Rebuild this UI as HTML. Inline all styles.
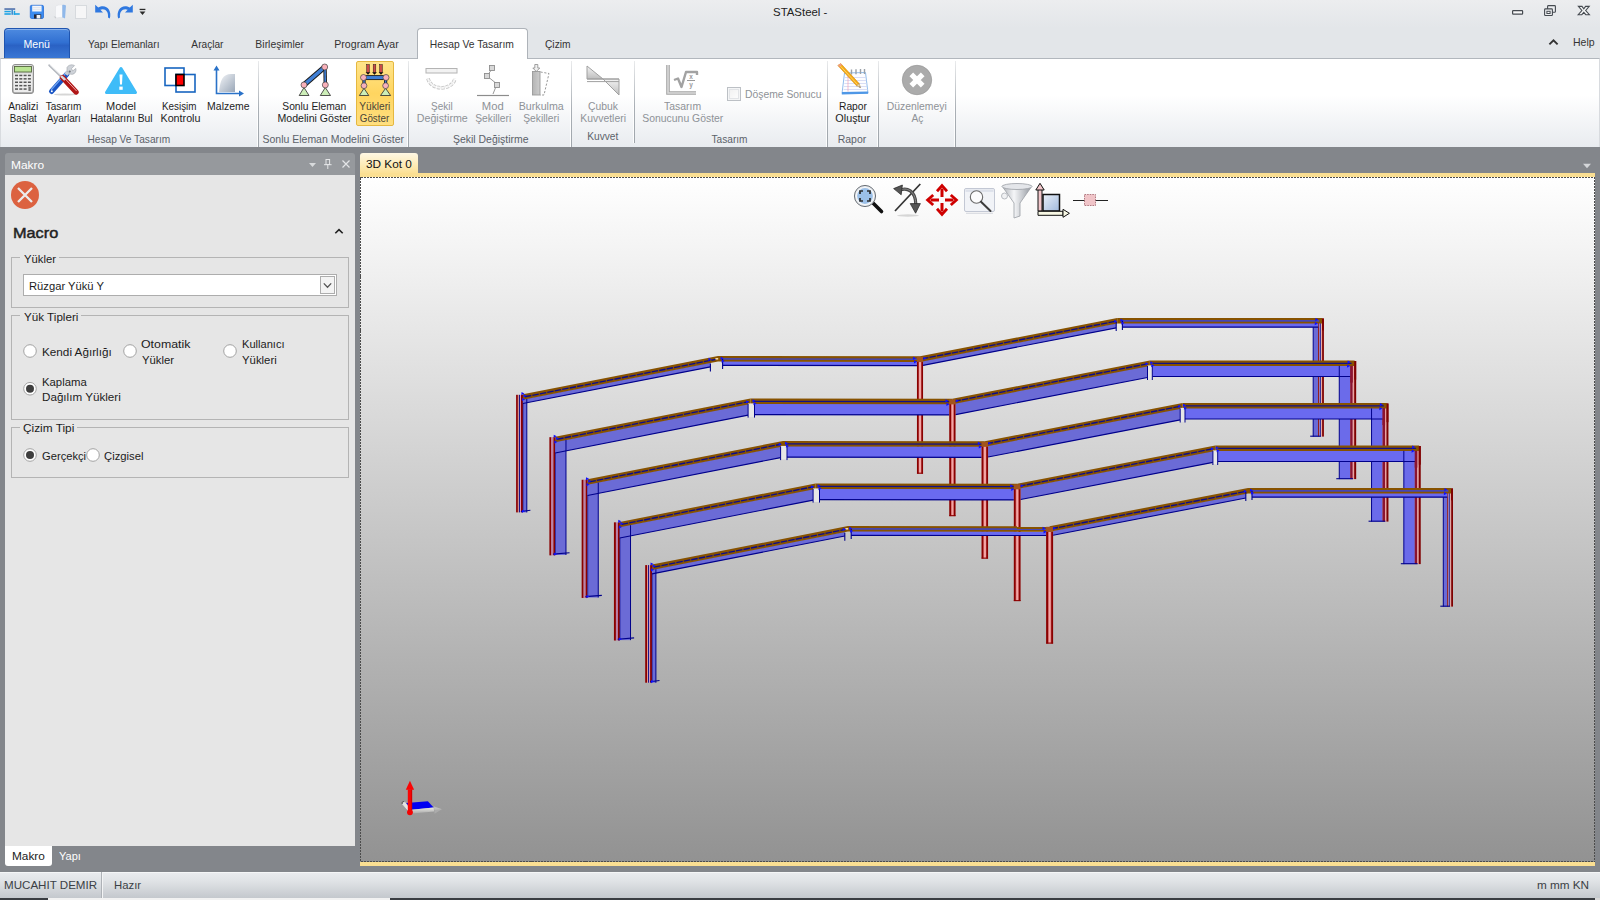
<!DOCTYPE html>
<html lang="tr">
<head>
<meta charset="utf-8">
<title>STASteel</title>
<style>
*{box-sizing:border-box;margin:0;padding:0}
html,body{width:1600px;height:900px;overflow:hidden}
body{position:relative;background:#83868b;font-family:"Liberation Sans",sans-serif;font-size:12px;color:#1e1e1e}
.abs{position:absolute}
.t{position:absolute;white-space:nowrap;line-height:14px}
.c{text-align:center}
#titlebar{position:absolute;left:0;top:0;width:1600px;height:58px;background:linear-gradient(#ecedef 0,#e3e6e9 28px,#e3e6e9 58px)}
#ribbon{position:absolute;left:0;top:58px;width:1600px;height:89px;background:linear-gradient(#fff 0,#fff 36px,#e8ebef 89px);border-top:1px solid #b2b7bd;border-left:1px solid #d8dbdf;border-right:1px solid #d8dbdf}
.sep{position:absolute;top:61px;height:86px;width:1px;background:linear-gradient(rgba(170,175,181,.25),#aab0b6 55%,#9fa5ab)}
.sep:after{content:"";position:absolute;left:-1px;top:0;width:1px;height:100%;background:rgba(255,255,255,.85)}
.lbl{position:absolute;text-align:center;white-space:nowrap;line-height:12px;font-size:12px;letter-spacing:-0.4px;color:#1e1e1e}
.dis{color:#8e9297}
.grp{position:absolute;top:132px;text-align:center;white-space:nowrap;line-height:14px;font-size:12px;letter-spacing:-0.3px;color:#5b626a}
.tab{position:absolute;top:37px;line-height:14px;font-size:12px;letter-spacing:-0.4px;white-space:nowrap;color:#262626}
</style>
</head>
<body>
<div id="titlebar"></div>
<!-- quick access toolbar -->
<svg class="abs" style="left:0;top:0" width="160" height="28" viewBox="0 0 160 28">
  <rect x="4.400" y="8.200" width="10.800" height="1.700" fill="#5878b0"/>
  <g fill="#1ea4e4"><rect x="4.400" y="10.800" width="6.400" height="1.500"/><rect x="4.400" y="13.200" width="6.400" height="1.600"/><rect x="13.700" y="10.800" width="1.500" height="4"/><rect x="13.700" y="13.200" width="6" height="1.600"/></g>
  <rect x="11.400" y="9.800" width="1.600" height="5" fill="#3f8fd0"/>
  <g><rect x="30.300" y="5.300" width="13.200" height="13.200" rx="1.400" fill="#3c8cf0" stroke="#2a6fd6" stroke-width=".8"/><rect x="32.200" y="5.700" width="9.400" height="5.800" fill="#f4f6fa"/><path d="M33 7.600 H40.800 M33 9.400 H40.800" stroke="#d4d9e2" stroke-width=".6"/><rect x="34" y="14.400" width="7.200" height="4.100" fill="#26283a"/><rect x="36.600" y="15" width="3.800" height="3.500" fill="#f4f4f6"/></g>
  <g><path d="M55.500 6.500 C57 5 60 4.600 62.500 5 L62.500 17.500 C60 17.200 57 17.600 55.500 18.600 Z" fill="#f8f9fb" stroke="#dcdfe3" stroke-width=".5"/><path d="M62.300 5 C63.500 4.600 65 4.800 66 5.400 L65 18.400 C64 17.800 63 17.600 62.300 17.600 Z" fill="#8fb8ea"/><path d="M53.600 16.200 L56.500 17 L55.500 18.600 Z" fill="#c9ccd0"/></g>
  <rect x="75.500" y="5.500" width="11" height="13" fill="#f6f6f7" stroke="#d2d5d9" stroke-width=".8"/>
  <path d="M95.200 4.800 L95.200 12.400 L103 12.400 L100.300 9.800 C104.600 8 108.800 11 108 17.600 L109.800 18.600 C112.400 9.600 105.400 3.200 98.200 7.600 Z" fill="#2f78e0"/>
  <path d="M132.800 4.800 L132.800 12.400 L125 12.400 L127.700 9.800 C123.400 8 119.200 11 120 17.600 L118.200 18.600 C115.600 9.600 122.600 3.200 129.800 7.600 Z" fill="#2f78e0"/>
  <rect x="139.600" y="8.800" width="5.800" height="1.300" fill="#2a2a2a"/><path d="M139.600 11.400 L145.400 11.400 L142.500 14.900 Z" fill="#2a2a2a"/>
</svg>
<!-- window buttons -->
<svg class="abs" style="left:1500px;top:0" width="100" height="28" viewBox="0 0 100 28">
  <rect x="12.600" y="10.600" width="10" height="3.600" rx=".6" fill="#f8f8f9" stroke="#454a50" stroke-width="1.200"/>
  <g fill="#eceef0" stroke="#454a50" stroke-width="1.100"><rect x="47.600" y="5.600" width="7.800" height="6.600" rx=".8"/><rect x="44.600" y="8.900" width="7.800" height="6.600" rx=".8"/></g><rect x="46.900" y="11.300" width="3.200" height="2.200" fill="#f8f8f9" stroke="#454a50" stroke-width="1"/>
  <path d="M78.400 6.400 L82 6.400 L83.800 8.800 L85.600 6.400 L89.200 6.400 L85.700 10.500 L89.400 14.700 L85.800 14.700 L83.800 12.300 L81.800 14.700 L78.200 14.700 L81.900 10.500 Z" fill="#f4f5f6" stroke="#454a50" stroke-width="1.100" stroke-linejoin="miter"/>
</svg>
<svg class="abs" style="left:1546px;top:36px" width="14" height="12" viewBox="0 0 14 12"><path d="M3.400 8.400 L7.500 4.300 L11.600 8.400" fill="none" stroke="#333" stroke-width="1.900"/></svg>
<!-- tabs -->
<div class="abs" style="left:4px;top:28px;width:66px;height:31px;border-radius:4px 4px 0 0;border:1px solid #1f55b0;border-bottom:none;background:linear-gradient(#4d8ae0 0,#3170d2 45%,#2a62c4 55%,#3b79d6 100%);box-shadow:inset 0 1px 0 rgba(255,255,255,.35)"></div>
<div class="abs" style="left:417px;top:28px;width:111px;height:31px;border:1px solid #aeb3b9;border-bottom:none;border-radius:4px 4px 0 0;background:#fff;z-index:3"></div>
<div id="ribbon"></div>
<!-- ribbon separators -->
<div class="sep" style="left:258px"></div><div class="sep" style="left:408px"></div><div class="sep" style="left:571px"></div><div class="sep" style="left:634px;height:82px"></div><div class="sep" style="left:827px"></div><div class="sep" style="left:878px"></div><div class="sep" style="left:955px"></div>
<!-- selected button -->
<div class="abs" style="left:356px;top:61px;width:38px;height:65px;border:1px solid #e5b840;border-radius:2px;background:linear-gradient(#ffe48a,#ffd560 50%,#ffdf80)"></div>
<!-- ICONS -->
<!-- calculator -->
<svg class="abs" style="left:11px;top:63px" width="24" height="32" viewBox="0 0 24 32">
  <defs><linearGradient id="cb" x1="0" y1="0" x2="0" y2="1"><stop offset="0" stop-color="#dcdcdc"/><stop offset=".8" stop-color="#cfcfcf"/><stop offset="1" stop-color="#a9a9a9"/></linearGradient></defs>
  <rect x="1.500" y="1.500" width="21" height="29" rx="2.500" fill="url(#cb)" stroke="#8f8f8f"/>
  <rect x="3" y="10.500" width="18" height="18.500" fill="#ececec"/>
  <rect x="3.500" y="3.500" width="17" height="5.500" fill="#b9e492" stroke="#55693f" stroke-width=".9"/>
  <g fill="#555"><rect x="4" y="11.700" width="3" height="1.500"/><rect x="8.300" y="11.700" width="3" height="1.500"/><rect x="12.600" y="11.700" width="3" height="1.500"/><rect x="16.900" y="11.700" width="3" height="1.500"/>
  <rect x="4" y="15.100" width="3" height="1.500"/><rect x="8.300" y="15.100" width="3" height="1.500"/><rect x="12.600" y="15.100" width="3" height="1.500"/><rect x="16.900" y="15.100" width="3" height="1.500"/>
  <rect x="4" y="18.500" width="3" height="1.500"/><rect x="8.300" y="18.500" width="3" height="1.500"/><rect x="12.600" y="18.500" width="3" height="1.500"/><rect x="16.900" y="18.500" width="3" height="1.500"/>
  <rect x="4" y="21.900" width="3" height="1.500"/><rect x="8.300" y="21.900" width="3" height="1.500"/><rect x="12.600" y="21.900" width="3" height="1.500"/><rect x="16.900" y="21.900" width="3" height="1.500"/>
  <rect x="4" y="25.300" width="3" height="1.500"/><rect x="8.300" y="25.300" width="3" height="1.500"/><rect x="12.600" y="25.300" width="3" height="1.500"/><rect x="17.400" y="24" width="2.400" height="4" fill="#777"/></g>
</svg>
<!-- tools -->
<svg class="abs" style="left:46px;top:62px" width="36" height="36" viewBox="0 0 36 36">
  <ellipse cx="19" cy="32.500" rx="11" ry="1" fill="#bbb" opacity=".6"/>
  <path d="M21 12 L5.500 29.500" stroke="#1a55c4" stroke-width="5" stroke-linecap="round"/>
  <path d="M19.500 11.500 L5.500 27.500" stroke="#6da2f0" stroke-width="1.200" stroke-linecap="round"/>
  <path d="M20 12.500 L23.500 8.500" stroke="#c9cdd3" stroke-width="4"/>
  <path d="M21 5.500 C22.500 2.800 26 2.200 28.500 3.600 L25.500 6.600 L26.700 9 L29.800 6.400 C30.600 8.800 29.300 11.600 26.800 12.200 C24 12.800 21.500 11 21 8.500 Z" fill="#cfd3d9" stroke="#9da2a9" stroke-width=".6"/>
  <circle cx="23.700" cy="9.600" r="1.100" fill="#70757c"/>
  <path d="M3.200 3.200 L17 16.500" stroke="#b4b8be" stroke-width="1.900" stroke-linecap="round"/>
  <path d="M3.600 2.800 L16 14.500" stroke="#f4f5f6" stroke-width=".7"/>
  <path d="M16.500 15.500 L30 30" stroke="#b01616" stroke-width="5.400" stroke-linecap="round"/>
  <path d="M17.500 15 L30.400 28.800" stroke="#f0b0b0" stroke-width="1" stroke-linecap="round"/>
  <path d="M15 14 L19 18" stroke="#d8dadd" stroke-width="2.400"/>
  <circle cx="5.800" cy="29.200" r="1" fill="#fff"/>
</svg>
<!-- warning -->
<svg class="abs" style="left:104px;top:64px" width="34" height="32" viewBox="0 0 34 32">
  <path d="M17 4.500 L31.500 28.500 L2.500 28.500 Z" fill="#3fbcf8" stroke="#3fbcf8" stroke-width="3" stroke-linejoin="round"/>
  <path d="M15.5 10.5 h3 l-.5 10 h-2 z" fill="#fff"/><rect x="15.3" y="22.6" width="3.4" height="3.2" fill="#fff"/>
</svg>
<!-- kesisim -->
<svg class="abs" style="left:163px;top:66px" width="34" height="28" viewBox="0 0 34 28">
  <rect x="2" y="2" width="19" height="17.5" fill="#fff" stroke="#1765c0" stroke-width="1.6"/>
  <rect x="13" y="8.5" width="19" height="17.5" fill="#fff" stroke="#1765c0" stroke-width="1.6"/>
  <rect x="13" y="8.5" width="8" height="11" fill="#f00" stroke="#000" stroke-width="1.6"/>
</svg>
<!-- malzeme -->
<svg class="abs" style="left:211px;top:64px" width="36" height="34" viewBox="0 0 36 34">
  <defs><linearGradient id="mz" x1="0" y1="0" x2="1" y2="1"><stop offset="0" stop-color="#f3f5f8"/><stop offset="1" stop-color="#9aa7b8"/></linearGradient></defs>
  <path d="M8 28 C9 16 12 10 20 10 L24 10 L24 28 Z" fill="url(#mz)"/>
  <path d="M5.5 4 L5.5 29.5 L30 29.5" fill="none" stroke="#2a72c8" stroke-width="1.6"/>
  <path d="M5.5 1.5 L8.5 6.5 L2.5 6.5 Z M33 29.5 L28 26.5 L28 32.5 Z" fill="#2a72c8"/>
</svg>
<!-- sonlu eleman -->
<svg class="abs" style="left:298px;top:62px" width="36" height="36" viewBox="0 0 36 36">
  <path d="M6 22.900 L26.700 5" stroke="#1a1a1a" stroke-width="5.400"/><path d="M6 22.900 L26.700 5" stroke="#3f7fd6" stroke-width="3.400"/>
  <path d="M27 5 L27.300 22.900" stroke="#1a1a1a" stroke-width="3.400"/><path d="M27 5 L27.300 22.900" stroke="#3f7fd6" stroke-width="1.600"/>
  <path d="M6 25.500 L11 33.500 L1.200 33.500 Z M27.300 25.500 L32.500 33.500 L22.300 33.500 Z" fill="#cdeeb8" stroke="#2a2a2a" stroke-width=".8"/>
  <g fill="#f8b0ba" stroke="#444" stroke-width=".7"><circle cx="26.700" cy="5" r="3"/><circle cx="6" cy="22.900" r="3"/><circle cx="27.300" cy="22.900" r="3"/></g>
</svg>
<!-- yukleri goster -->
<svg class="abs" style="left:358px;top:61px" width="34" height="37" viewBox="358 61 34 37">
  <g fill="#cc4a48" stroke="#2a1414" stroke-width=".5"><rect x="366.700" y="64.600" width="2.600" height="8"/><rect x="373.200" y="64.600" width="2.600" height="8"/><rect x="379.700" y="64.600" width="2.600" height="8"/></g>
  <g fill="#1a1010"><path d="M365.600 72.200 h4.800 l-2.400 2.600 z M372.100 72.200 h4.800 l-2.400 2.600 z M378.600 72.200 h4.800 l-2.400 2.600 z"/></g>
  <rect x="363.500" y="75.600" width="22.500" height="4" fill="#3f7fd6" stroke="#1a1a1a" stroke-width=".9"/>
  <path d="M364 79 V86 M385.600 79 V86" stroke="#1a1a1a" stroke-width="3.200"/><path d="M364 79 V86 M385.600 79 V86" stroke="#3f7fd6" stroke-width="1.500"/>
  <path d="M364 88.300 L368.800 95.500 L359.400 95.500 Z M385.600 88.300 L390.600 95.500 L380.500 95.500 Z" fill="#cdeeb8" stroke="#2a2a2a" stroke-width=".8"/>
  <g fill="#f8b0ba" stroke="#444" stroke-width=".7"><circle cx="363.500" cy="77.500" r="3"/><circle cx="386" cy="77.500" r="3"/><circle cx="364" cy="85.700" r="2.900"/><circle cx="385.600" cy="85.700" r="2.900"/></g>
</svg>
<!-- sekil degistirme (disabled) -->
<svg class="abs" style="left:424px;top:66px" width="36" height="28" viewBox="0 0 36 28">
  <rect x="2" y="2.5" width="31" height="4.5" fill="#f2f2f2" stroke="#b4b4b4"/>
  <path d="M4 12.500 C7 25 28 25 31 12.500" fill="none" stroke="#c4c4c4" stroke-width="3.600" stroke-dasharray="3.200 1.200"/>
  <path d="M4 12.500 C7 25 28 25 31 12.500" fill="none" stroke="#f6f6f6" stroke-width="2" stroke-dasharray="3.200 1.200"/>
</svg>
<!-- mod sekilleri -->
<svg class="abs" style="left:475px;top:63px" width="36" height="35" viewBox="0 0 36 35">
  <path d="M17 6 L12 13 L22 21 L18 31" fill="none" stroke="#9a9a9a" stroke-width="1"/>
  <path d="M2 32.5 H34" stroke="#8c8c8c" stroke-width="1.2"/>
  <g fill="#d8d8d8" stroke="#8f8f8f" stroke-width=".9"><rect x="14.5" y="2.5" width="5" height="5"/><rect x="9.5" y="10.5" width="5" height="5"/><rect x="19.5" y="19.5" width="5" height="5"/></g>
</svg>
<!-- burkulma -->
<svg class="abs" style="left:527px;top:62px" width="28" height="36" viewBox="0 0 28 36">
  <defs><linearGradient id="bk" x1="0" y1="0" x2="1" y2="0"><stop offset="0" stop-color="#b4b4b4"/><stop offset="1" stop-color="#cdcdcd"/></linearGradient></defs>
  <rect x="5.500" y="9.500" width="7.500" height="23.500" fill="url(#bk)" stroke="#9a9a9a" stroke-width=".9"/>
  <path d="M13.500 10 L22 11.500 L17 33 L13 33" fill="none" stroke="#8f8f8f" stroke-width=".9" stroke-dasharray="2.200 1.600"/>
  <path d="M7.800 2.500 H10.800 V6 H12.800 L9.300 9.500 L5.800 6 H7.800 Z" fill="#f0f0f0" stroke="#8a8a8a" stroke-width=".8"/>
</svg>
<!-- cubuk kuvvetleri -->
<svg class="abs" style="left:585px;top:64px" width="36" height="33" viewBox="0 0 36 33">
  <defs><linearGradient id="ck" x1="0" y1="0" x2="0" y2="1"><stop offset="0" stop-color="#f4f4f4"/><stop offset="1" stop-color="#bdbdbd"/></linearGradient></defs>
  <path d="M2 2 L2 15 L18 15 Z" fill="url(#ck)" stroke="#a0a0a0"/><path d="M34 31 L34 15 L18 15 Z" fill="url(#ck)" stroke="#a0a0a0"/>
  <path d="M2 15 H34 M2 17.6 H34" stroke="#a0a0a0"/>
</svg>
<!-- tasarim sonucu -->
<svg class="abs" style="left:665px;top:63px" width="36" height="33" viewBox="0 0 36 33">
  <path d="M3 2 V30 H31" fill="none" stroke="#a4a4a4" stroke-width="3.6"/><path d="M3 2 V30 H31" fill="none" stroke="#d9d9d9" stroke-width="1.6"/>
  <path d="M9 17 L13 15.5 L16.5 24 L21 9 L32 9 L32 12" fill="none" stroke="#a2a2a2" stroke-width="2.4" stroke-linejoin="round"/>
  <path d="M22 17.5 H30" stroke="#9a9a9a" stroke-width="1"/>
  <text x="26" y="16" font-family="Liberation Sans, sans-serif" font-size="6.5" font-weight="bold" text-anchor="middle" fill="#9a9a9a">x</text>
  <text x="26" y="24" font-family="Liberation Sans, sans-serif" font-size="6.5" font-weight="bold" text-anchor="middle" fill="#9a9a9a">y</text>
</svg>
<!-- checkbox -->
<div class="abs" style="left:727px;top:87px;width:14px;height:14px;border:1px solid #bcc0c5;background:linear-gradient(135deg,#efefef,#fff);box-shadow:inset 0 0 0 1px #f4f5f6,inset 0 0 0 2px #e2e4e7"></div>
<!-- rapor -->
<svg class="abs" style="left:834px;top:62px" width="38" height="36" viewBox="0 0 38 36">
  <path d="M10.500 11 L31.500 10.500 L34 31 L8 31.500 Z" fill="#fdfdff" stroke="#86b6ea" stroke-width=".9"/>
  <path d="M8 30 L34 29.400 L34.200 31.800 L7.800 32.400 Z" fill="#4e97e6"/>
  <g stroke="#cfd6f2" stroke-width=".8"><path d="M11 15.500 H32 M10.800 18.500 H32.400 M10.400 21.500 H32.800 M10 24.500 H33.200 M9.600 27.500 H33.600"/></g>
  <path d="M14 12 V29.500" stroke="#f2a0b4" stroke-width=".7"/>
  <g stroke="#9aa0a8" stroke-width="1.400"><path d="M17.500 7.500 V12.500 M22 7.300 V12.300 M26.500 7.100 V12.100 M30.500 6.900 V11.900"/></g>
  <path d="M3.800 3.400 L6.800 1.600 L25.200 21.600 L22.600 23.800 Z" fill="#f7aa14" stroke="#c98208" stroke-width=".5"/>
  <path d="M5 2.600 L23.800 22.800" stroke="#fbd774" stroke-width=".9"/>
  <path d="M3.800 3.400 L6.800 1.600 L8 2.900 L5 4.700 Z" fill="#f09a8a"/>
  <path d="M22.600 23.800 L25.200 21.600 L26.600 25.600 Z" fill="#f3d9a4" stroke="#8a6a30" stroke-width=".4"/><path d="M25.800 24.400 L26.600 25.600 L25.200 25.200 Z" fill="#222"/>
</svg>
<!-- duzenlemeyi ac -->
<svg class="abs" style="left:900px;top:63px" width="34" height="34" viewBox="0 0 34 34">
  <circle cx="17" cy="17" r="14.700" fill="#ababab" stroke="#9c9c9c" stroke-width=".8"/>
  <path d="M11.3 11.3 L22.7 22.7 M22.7 11.3 L11.3 22.7" stroke="#fff" stroke-width="5.200"/>
</svg>
<!-- LABELS -->
<!-- LEFT PANEL -->
<div class="abs" style="left:5px;top:153px;width:350px;height:22px;background:#96999d;border-radius:3px 3px 0 0"></div>
<svg class="abs" style="left:305px;top:156px" width="48" height="16" viewBox="0 0 48 16">
  <path d="M4 7 L11 7 L7.5 11 Z" fill="#d8dadc"/>
  <g stroke="#e4e5e7" stroke-width="1" fill="none"><rect x="21" y="3.5" width="3.6" height="5"/><path d="M19 8.7 H26.6 M22.8 9 V13"/></g>
  <path d="M37.5 4.5 L44.5 11.5 M44.5 4.5 L37.5 11.5" stroke="#e4e5e7" stroke-width="1.2"/>
</svg>
<div class="abs" style="left:5px;top:175px;width:350px;height:671px;background:#e6e6e6"></div>
<svg class="abs" style="left:10px;top:180px" width="30" height="30" viewBox="0 0 30 30">
  <circle cx="15" cy="15" r="14" fill="#dc6240"/>
  <path d="M8 8 L22 22 M22 8 L8 22" stroke="#ececec" stroke-width="2.300"/>
</svg>
<svg class="abs" style="left:333px;top:226px" width="12" height="10" viewBox="0 0 12 10"><path d="M2.3 7.3 L6 3.6 L9.7 7.3" fill="none" stroke="#222" stroke-width="1.6"/></svg>
<!-- fieldsets -->
<div class="abs" style="left:11px;top:257px;width:338px;height:51px;border:1px solid #b4b4b4"></div>
<div class="abs" style="left:20px;top:255px;width:39px;height:6px;background:#e6e6e6"></div>
<div class="abs" style="left:23px;top:274px;width:314px;height:22px;border:1px solid #adadad;background:#fff"></div>
<div class="abs" style="left:320px;top:276px;width:15px;height:18px;border:1px solid #adadad;background:#f4f4f4"></div>
<svg class="abs" style="left:322px;top:281px" width="11" height="9" viewBox="0 0 11 9"><path d="M1.8 2.4 L5.5 6.2 L9.2 2.4" fill="none" stroke="#555" stroke-width="1.3"/></svg>

<div class="abs" style="left:11px;top:315px;width:338px;height:105px;border:1px solid #b4b4b4"></div>
<div class="abs" style="left:11px;top:427px;width:338px;height:51px;border:1px solid #b4b4b4"></div>
<div class="abs" style="left:20px;top:425px;width:57px;height:6px;background:#e6e6e6"></div>
<div class="abs" style="left:20px;top:313px;width:61px;height:6px;background:#e6e6e6"></div>
<!-- radios -->
<svg class="abs" style="left:0;top:330px" width="360" height="140" viewBox="0 330 360 140">
  <g fill="#fff" stroke="#a3a3a3" stroke-width="1"><circle cx="30" cy="351" r="6.3"/><circle cx="130" cy="351" r="6.3"/><circle cx="230" cy="351" r="6.3"/><circle cx="30" cy="388.750" r="6.3"/><circle cx="30" cy="455" r="6.3"/><circle cx="93" cy="455" r="6.3"/></g>
  <circle cx="30" cy="388.750" r="4" fill="#3e3e3e"/><circle cx="30" cy="455" r="4" fill="#3e3e3e"/>
</svg>
<!-- bottom tabs -->
<div class="abs" style="left:5px;top:846px;width:47px;height:20px;background:#fff;border-radius:0 0 3px 3px"></div>
<!-- STATUS BAR -->
<div class="abs" style="left:0;top:872px;width:1600px;height:26px;background:linear-gradient(#e9ebee 0,#dfe2e5 35%,#c4c8cd 100%);border-top:1px solid #f5f6f7"></div>
<div class="abs" style="left:101px;top:872px;width:1px;height:26px;background:#aeb2b7"></div><div class="abs" style="left:102px;top:872px;width:1px;height:26px;background:#f3f4f5"></div>
<div class="abs" style="left:0;top:898px;width:1600px;height:2px;background:#3a3d42"></div>
<div class="abs" style="left:48px;top:898px;width:342px;height:2px;background:#f2f2f2"></div>
<div class="abs" style="left:1595px;top:898px;width:5px;height:2px;background:#d8d8d8"></div>
<!-- DOCUMENT TAB + VIEWPORT -->
<div class="abs" style="left:360px;top:153px;width:58px;height:21px;border-radius:3px 3px 0 0;background:linear-gradient(#fff8e4 0,#fdeab4 60%,#fbdf92 100%)"></div>
<svg class="abs" style="left:1581px;top:162px" width="12" height="8" viewBox="0 0 12 8"><path d="M2 1.8 L10 1.8 L6 6.2 Z" fill="#d4d6d9"/></svg>
<div class="abs" style="left:360px;top:173px;width:1235px;height:4px;background:#fbdf92"></div>
<div class="abs" style="left:360px;top:862px;width:1235px;height:4px;background:#fbdf92"></div>
<div class="abs" style="left:360px;top:177px;width:1235px;height:685px;background:linear-gradient(#ffffff 0,#929292 100%)"></div>
<svg class="abs" style="left:360px;top:177px" width="1235" height="685" viewBox="0 0 1235 685"><rect x=".5" y=".5" width="1234" height="684" fill="none" stroke="#4c4c4c" stroke-width="1" stroke-dasharray="2 1" shape-rendering="crispEdges"/></svg>
<svg class="abs" style="left:0;top:0" width="1600" height="900" viewBox="0 0 1600 900" shape-rendering="geometricPrecision">
<defs><linearGradient id="mc" x1="0" y1="0" x2="1" y2="0"><stop offset="0" stop-color="#8b0000"/><stop offset=".2" stop-color="#8b0000"/><stop offset=".42" stop-color="#f4a6a6"/><stop offset=".6" stop-color="#f4a6a6"/><stop offset=".8" stop-color="#8b0000"/><stop offset="1" stop-color="#8b0000"/></linearGradient></defs>
<g><!-- frame 1 -->
<rect x="1313.2" y="319" width="4.8" height="117.6" fill="#6b6bd6"/>
<path d="M1313.2 319 L1313.2 436.6" stroke="#00008b" stroke-width="1"/>
<rect x="1318.1" y="319" width="1" height="117.6" fill="#8b0a0a"/>
<rect x="1319.1" y="319" width="1.1" height="117.6" fill="#8a70c0"/>
<rect x="1320.2" y="319" width="0.9" height="117.6" fill="#12128c"/>
<rect x="1321.1" y="319" width="1" height="117.6" fill="#f0a8a0"/>
<rect x="1322.1" y="318.5" width="1.8" height="118.1" fill="#800000"/>
<path d="M1310.2 436.2 L1320.8 436.2" stroke="#00008b" stroke-width="1.1"/>
<rect x="516.1" y="394.8" width="1.8" height="117.6" fill="#8b0000"/>
<rect x="517.9" y="394.8" width="1" height="117.6" fill="#e09a94"/>
<rect x="518.9" y="394.8" width="1.1" height="117.6" fill="#18188c"/>
<rect x="520" y="394.8" width="1" height="117.6" fill="#d898c0"/>
<rect x="521" y="394.8" width="2" height="117.6" fill="#8b0000"/>
<rect x="523.2" y="396.2" width="3.6" height="116.2" fill="#6b6bd6"/>
<path d="M523.2 397.2 L523.2 511.8" stroke="#2020a0" stroke-width="0.8"/>
<path d="M520.9 511.5 L530.4 510.2" stroke="#00008b" stroke-width="1.1"/>
<polygon points="522.9,399.3 710.4,362.59 710.4,366.89 522.9,403.6" fill="#6b6bd6"/>
<path d="M522.9 403.55 L710.4 366.84" stroke="#00008b" stroke-width="1.1"/>
<polygon points="522.9,394.2 718,356 718,361.6 522.9,399.8" fill="#875200"/>
<path d="M524.9 396.76 L716 359.34" stroke="#0c0c8b" stroke-width="1.35" stroke-dasharray="6.5 1.1"/>
<path d="M526.8 399.04 L526.8 512.4" stroke="#00008b" stroke-width="1"/>
<polygon points="722.6,361.11 916.95,361.4 916.95,365.7 722.6,365.41" fill="#6a6af0"/>
<path d="M722.6 365.36 L916.95 365.65" stroke="#00008b" stroke-width="1.1"/>
<polygon points="718,356 920,356.3 920,361.9 718,361.6" fill="#875200"/>
<path d="M722 358.96 L917 359.25" stroke="#4646b4" stroke-width="1.7"/>
<path d="M710.4 363.49 L710.4 371.49" stroke="#00008b" stroke-width="1.1"/>
<path d="M722.6 359 L722.6 369" stroke="#00008b" stroke-width="1.1"/>
<rect x="715.4" y="358" width="2.8" height="1.6" fill="#f2d9a8"/>
<path d="M708.5 357.7 l3 1.5 l-3.2 1.7 z" fill="#1010ff"/>
<path d="M720.7 356.7 l3 1.5 l-3.2 1.7 z" fill="#1010ff"/>
<path d="M721.7 359.5 l3 1.5 l-3.2 1.7 z" fill="#1010ff"/>
<polygon points="923.05,360.81 1116.2,323.29 1116.2,327.89 923.05,365.41" fill="#6b6bd6"/>
<path d="M923.05 365.36 L1116.2 327.84" stroke="#00008b" stroke-width="1.1"/>
<polygon points="920,356.3 1117.2,318 1117.2,323.6 920,361.9" fill="#875200"/>
<path d="M922 358.86 L1115.2 321.34" stroke="#0c0c8b" stroke-width="1.35" stroke-dasharray="6.5 1.1"/>
<polygon points="1122.4,323.1 1318.2,323.1 1318.2,327.2 1122.4,327.2" fill="#6a6af0"/>
<path d="M1122.4 327.15 L1318.2 327.15" stroke="#00008b" stroke-width="1.1"/>
<polygon points="1117.2,318 1322.3,318 1322.3,323.6 1117.2,323.6" fill="#875200"/>
<path d="M1121.2 320.95 L1319.3 320.95" stroke="#4646b4" stroke-width="1.7"/>
<path d="M1116.2 322 L1116.2 331" stroke="#00008b" stroke-width="1.1"/>
<path d="M1122.4 321 L1122.4 330" stroke="#00008b" stroke-width="1.1"/>
<path d="M1114.3 319.7 l3 1.5 l-3.2 1.7 z" fill="#1010ff"/>
<path d="M1120.5 318.7 l3 1.5 l-3.2 1.7 z" fill="#1010ff"/>
<path d="M1121.5 321.5 l3 1.5 l-3.2 1.7 z" fill="#1010ff"/>
<rect x="1322" y="318.5" width="1.9" height="11.9" fill="#800000"/>
<path d="M1315.4 318 l3 1.5 l-3.2 1.7 z" fill="#1010ff"/>
<path d="M1314.9 322 l3 1.5 l-3.2 1.7 z" fill="#1010ff"/>
<rect x="916.95" y="361.3" width="6.1" height="112.3" fill="url(#mc)"/>
<path d="M916.95 473.2 L923.05 473.2" stroke="#8b0000" stroke-width="1.1"/>
<rect x="916.95" y="356.9" width="6.1" height="5.2" fill="#a2541c"/>
<path d="M913.1 356.8 l3 1.5 l-3.2 1.7 z" fill="#1010ff"/>
<path d="M923.6 356.8 l3 1.5 l-3.2 1.7 z" fill="#1010ff"/>
<path d="M914.1 360.3 l3 1.5 l-3.2 1.7 z" fill="#1010ff"/>
<path d="M521.5 392.1 l3 1.5 l-3.2 1.7 z" fill="#1010ff"/>
<path d="M523.7 394.3 l3 1.5 l-3.2 1.7 z" fill="#1010ff"/>
<path d="M522.1 397.9 l3 1.5 l-3.2 1.7 z" fill="#1010ff"/>
<path d="M522 509.8 l3 1.5 l-3.2 1.7 z" fill="#1010ff"/>
</g>
<g><!-- frame 2 -->
<rect x="1339.28" y="361.5" width="11" height="117.6" fill="#6b6bea"/>
<path d="M1339.28 361.5 L1339.28 479.1" stroke="#00008b" stroke-width="1"/>
<rect x="1350.17" y="361.5" width="2.6" height="117.6" fill="#8b1430"/>
<rect x="1352.78" y="361.5" width="1.4" height="117.6" fill="#eea0a0"/>
<rect x="1354.17" y="361" width="2" height="118.1" fill="#800000"/>
<path d="M1336.28 478.7 L1353.08 478.7" stroke="#00008b" stroke-width="1.1"/>
<rect x="549.38" y="437.17" width="2" height="118.2" fill="#8b0000"/>
<rect x="551.38" y="437.17" width="2" height="118.2" fill="#bc80aa"/>
<rect x="553.38" y="437.17" width="2" height="118.2" fill="#8b0000"/>
<rect x="555.47" y="438.77" width="10.5" height="116.2" fill="#6b6bd6"/>
<path d="M555.47 439.77 L555.47 554.38" stroke="#2020a0" stroke-width="0.8"/>
<path d="M553.17 554.08 L569.57 552.77" stroke="#00008b" stroke-width="1.1"/>
<polygon points="555.17,441.67 748.1,403.87 748.1,415.17 555.17,452.97" fill="#6b6bd6"/>
<path d="M555.17 452.92 L748.1 415.12" stroke="#00008b" stroke-width="1.1"/>
<polygon points="555.17,436.77 750.5,398.5 750.5,403.9 555.17,442.17" fill="#875200"/>
<path d="M557.17 439.23 L748.5 401.74" stroke="#0c0c8b" stroke-width="1.35" stroke-dasharray="6.5 1.1"/>
<path d="M565.97 440.06 L565.97 554.98" stroke="#00008b" stroke-width="1"/>
<polygon points="754.5,403.41 949.24,403.67 949.24,414.97 754.5,414.71" fill="#6a6af0"/>
<path d="M754.5 414.66 L949.24 414.92" stroke="#00008b" stroke-width="1.1"/>
<polygon points="750.5,398.5 952.4,398.78 952.4,404.18 750.5,403.9" fill="#875200"/>
<path d="M753.5 401.35 L949.4 401.62" stroke="#10108b" stroke-width="1.2"/>
<rect x="748.1" y="403.4" width="6.4" height="13.5" fill="#e6e6e6"/>
<path d="M748.1 403.9 L748.1 417.6" stroke="#00008b" stroke-width="1"/>
<path d="M754.5 403.9 L754.5 417.6" stroke="#00008b" stroke-width="1"/>
<path d="M746.2 400.2 l3 1.5 l-3.2 1.7 z" fill="#1010ff"/>
<path d="M752.6 399.2 l3 1.5 l-3.2 1.7 z" fill="#1010ff"/>
<path d="M753.6 402 l3 1.5 l-3.2 1.7 z" fill="#1010ff"/>
<polygon points="955.56,403.06 1147.5,365.87 1147.5,377.47 955.56,414.66" fill="#6b6bd6"/>
<path d="M955.56 414.61 L1147.5 377.42" stroke="#00008b" stroke-width="1.1"/>
<polygon points="952.4,398.78 1149.9,360.5 1149.9,365.9 952.4,404.18" fill="#875200"/>
<path d="M954.4 401.24 L1147.9 363.74" stroke="#0c0c8b" stroke-width="1.35" stroke-dasharray="6.5 1.1"/>
<polygon points="1152.3,365.4 1350.48,365.4 1350.48,376.5 1152.3,376.5" fill="#6a6af0"/>
<path d="M1152.3 376.45 L1350.48 376.45" stroke="#00008b" stroke-width="1.1"/>
<polygon points="1149.9,360.5 1354.58,360.5 1354.58,365.9 1149.9,365.9" fill="#875200"/>
<path d="M1152.9 363.35 L1351.58 363.35" stroke="#10108b" stroke-width="1.2"/>
<rect x="1147.5" y="365.4" width="4.8" height="13.9" fill="#e6e6e6"/>
<path d="M1147.5 365.9 L1147.5 380" stroke="#00008b" stroke-width="1"/>
<path d="M1152.3 365.9 L1152.3 380" stroke="#00008b" stroke-width="1"/>
<path d="M1339.28 365.9 L1339.28 377.2" stroke="#00008b" stroke-width="1"/>
<path d="M1145.6 362.2 l3 1.5 l-3.2 1.7 z" fill="#1010ff"/>
<path d="M1150.4 361.2 l3 1.5 l-3.2 1.7 z" fill="#1010ff"/>
<path d="M1151.4 364 l3 1.5 l-3.2 1.7 z" fill="#1010ff"/>
<rect x="1354.28" y="361" width="1.9" height="18.7" fill="#800000"/>
<rect x="1350.17" y="365.9" width="2.6" height="16.7" fill="#8b1430"/>
<path d="M1347.67 360.5 l3 1.5 l-3.2 1.7 z" fill="#1010ff"/>
<path d="M1347.17 364.5 l3 1.5 l-3.2 1.7 z" fill="#1010ff"/>
<rect x="949.24" y="403.57" width="6.32" height="112.5" fill="url(#mc)"/>
<path d="M949.24 515.68 L955.56 515.68" stroke="#8b0000" stroke-width="1.1"/>
<rect x="949.24" y="399.38" width="6.32" height="5" fill="#a2541c"/>
<path d="M945.5 399.28 l3 1.5 l-3.2 1.7 z" fill="#1010ff"/>
<path d="M956 399.28 l3 1.5 l-3.2 1.7 z" fill="#1010ff"/>
<path d="M946.5 402.78 l3 1.5 l-3.2 1.7 z" fill="#1010ff"/>
<path d="M553.77 434.67 l3 1.5 l-3.2 1.7 z" fill="#1010ff"/>
<path d="M555.98 436.88 l3 1.5 l-3.2 1.7 z" fill="#1010ff"/>
<path d="M554.38 440.47 l3 1.5 l-3.2 1.7 z" fill="#1010ff"/>
<path d="M554.27 552.38 l3 1.5 l-3.2 1.7 z" fill="#1010ff"/>
</g>
<g><!-- frame 3 -->
<rect x="1371.55" y="404" width="11" height="117.6" fill="#6b6bea"/>
<path d="M1371.55 404 L1371.55 521.6" stroke="#00008b" stroke-width="1"/>
<rect x="1382.45" y="404" width="2.6" height="117.6" fill="#8b1430"/>
<rect x="1385.05" y="404" width="1.4" height="117.6" fill="#eea0a0"/>
<rect x="1386.45" y="403.5" width="2" height="118.1" fill="#800000"/>
<path d="M1368.55 521.2 L1385.35 521.2" stroke="#00008b" stroke-width="1.1"/>
<rect x="581.65" y="479.75" width="2" height="118.2" fill="#8b0000"/>
<rect x="583.65" y="479.75" width="2" height="118.2" fill="#bc80aa"/>
<rect x="585.65" y="479.75" width="2" height="118.2" fill="#8b0000"/>
<rect x="587.75" y="481.35" width="10.5" height="116.2" fill="#6b6bd6"/>
<path d="M587.75 482.35 L587.75 596.95" stroke="#2020a0" stroke-width="0.8"/>
<path d="M585.45 596.65 L601.85 595.35" stroke="#00008b" stroke-width="1.1"/>
<polygon points="587.45,484.25 780.6,446.37 780.6,457.67 587.45,495.55" fill="#6b6bd6"/>
<path d="M587.45 495.5 L780.6 457.62" stroke="#00008b" stroke-width="1.1"/>
<polygon points="587.45,479.35 783,441 783,446.4 587.45,484.75" fill="#875200"/>
<path d="M589.45 481.81 L781 444.24" stroke="#0c0c8b" stroke-width="1.35" stroke-dasharray="6.5 1.1"/>
<path d="M598.25 482.63 L598.25 597.55" stroke="#00008b" stroke-width="1"/>
<polygon points="787,445.9 981.52,446.15 981.52,457.45 787,457.2" fill="#6a6af0"/>
<path d="M787 457.15 L981.52 457.4" stroke="#00008b" stroke-width="1.1"/>
<polygon points="783,441 984.8,441.25 984.8,446.65 783,446.4" fill="#875200"/>
<path d="M786 443.85 L981.8 444.1" stroke="#10108b" stroke-width="1.2"/>
<rect x="780.6" y="445.9" width="6.4" height="13.5" fill="#e6e6e6"/>
<path d="M780.6 446.4 L780.6 460.1" stroke="#00008b" stroke-width="1"/>
<path d="M787 446.4 L787 460.1" stroke="#00008b" stroke-width="1"/>
<path d="M778.7 442.7 l3 1.5 l-3.2 1.7 z" fill="#1010ff"/>
<path d="M785.1 441.7 l3 1.5 l-3.2 1.7 z" fill="#1010ff"/>
<path d="M786.1 444.5 l3 1.5 l-3.2 1.7 z" fill="#1010ff"/>
<polygon points="988.07,445.52 1180.2,408.36 1180.2,419.96 988.07,457.12" fill="#6b6bd6"/>
<path d="M988.07 457.07 L1180.2 419.91" stroke="#00008b" stroke-width="1.1"/>
<polygon points="984.8,441.25 1182.6,403 1182.6,408.4 984.8,446.65" fill="#875200"/>
<path d="M986.8 443.71 L1180.6 406.24" stroke="#0c0c8b" stroke-width="1.35" stroke-dasharray="6.5 1.1"/>
<polygon points="1185,407.9 1382.75,407.9 1382.75,419 1185,419" fill="#6a6af0"/>
<path d="M1185 418.95 L1382.75 418.95" stroke="#00008b" stroke-width="1.1"/>
<polygon points="1182.6,403 1386.85,403 1386.85,408.4 1182.6,408.4" fill="#875200"/>
<path d="M1185.6 405.85 L1383.85 405.85" stroke="#10108b" stroke-width="1.2"/>
<rect x="1180.2" y="407.9" width="4.8" height="13.9" fill="#e6e6e6"/>
<path d="M1180.2 408.4 L1180.2 422.5" stroke="#00008b" stroke-width="1"/>
<path d="M1185 408.4 L1185 422.5" stroke="#00008b" stroke-width="1"/>
<path d="M1371.55 408.4 L1371.55 419.7" stroke="#00008b" stroke-width="1"/>
<path d="M1178.3 404.7 l3 1.5 l-3.2 1.7 z" fill="#1010ff"/>
<path d="M1183.1 403.7 l3 1.5 l-3.2 1.7 z" fill="#1010ff"/>
<path d="M1184.1 406.5 l3 1.5 l-3.2 1.7 z" fill="#1010ff"/>
<rect x="1386.55" y="403.5" width="1.9" height="18.7" fill="#800000"/>
<rect x="1382.45" y="408.4" width="2.6" height="16.7" fill="#8b1430"/>
<path d="M1379.95 403 l3 1.5 l-3.2 1.7 z" fill="#1010ff"/>
<path d="M1379.45 407 l3 1.5 l-3.2 1.7 z" fill="#1010ff"/>
<rect x="981.52" y="446.05" width="6.55" height="112.5" fill="url(#mc)"/>
<path d="M981.52 558.15 L988.07 558.15" stroke="#8b0000" stroke-width="1.1"/>
<rect x="981.52" y="441.85" width="6.55" height="5" fill="#a2541c"/>
<path d="M977.9 441.75 l3 1.5 l-3.2 1.7 z" fill="#1010ff"/>
<path d="M988.4 441.75 l3 1.5 l-3.2 1.7 z" fill="#1010ff"/>
<path d="M978.9 445.25 l3 1.5 l-3.2 1.7 z" fill="#1010ff"/>
<path d="M586.05 477.25 l3 1.5 l-3.2 1.7 z" fill="#1010ff"/>
<path d="M588.25 479.45 l3 1.5 l-3.2 1.7 z" fill="#1010ff"/>
<path d="M586.65 483.05 l3 1.5 l-3.2 1.7 z" fill="#1010ff"/>
<path d="M586.55 594.95 l3 1.5 l-3.2 1.7 z" fill="#1010ff"/>
</g>
<g><!-- frame 4 -->
<rect x="1403.83" y="446.5" width="11" height="117.6" fill="#6b6bea"/>
<path d="M1403.83 446.5 L1403.83 564.1" stroke="#00008b" stroke-width="1"/>
<rect x="1414.72" y="446.5" width="2.6" height="117.6" fill="#8b1430"/>
<rect x="1417.33" y="446.5" width="1.4" height="117.6" fill="#eea0a0"/>
<rect x="1418.72" y="446" width="2" height="118.1" fill="#800000"/>
<path d="M1400.83 563.7 L1417.62 563.7" stroke="#00008b" stroke-width="1.1"/>
<rect x="613.93" y="522.32" width="2" height="118.2" fill="#8b0000"/>
<rect x="615.93" y="522.32" width="2" height="118.2" fill="#bc80aa"/>
<rect x="617.93" y="522.32" width="2" height="118.2" fill="#8b0000"/>
<rect x="620.02" y="523.92" width="10.5" height="116.2" fill="#6b6bd6"/>
<path d="M620.02 524.92 L620.02 639.52" stroke="#2020a0" stroke-width="0.8"/>
<path d="M617.73 639.23 L634.12 637.92" stroke="#00008b" stroke-width="1.1"/>
<polygon points="619.73,526.82 813.1,488.87 813.1,500.17 619.73,538.12" fill="#6b6bd6"/>
<path d="M619.73 538.08 L813.1 500.12" stroke="#00008b" stroke-width="1.1"/>
<polygon points="619.73,521.92 815.5,483.5 815.5,488.9 619.73,527.32" fill="#875200"/>
<path d="M621.73 524.38 L813.5 486.74" stroke="#0c0c8b" stroke-width="1.35" stroke-dasharray="6.5 1.1"/>
<path d="M630.52 525.21 L630.52 640.12" stroke="#00008b" stroke-width="1"/>
<polygon points="819.5,488.4 1013.81,488.62 1013.81,499.92 819.5,499.7" fill="#6a6af0"/>
<path d="M819.5 499.65 L1013.81 499.87" stroke="#00008b" stroke-width="1.1"/>
<polygon points="815.5,483.5 1017.2,483.73 1017.2,489.12 815.5,488.9" fill="#875200"/>
<path d="M818.5 486.35 L1014.2 486.57" stroke="#10108b" stroke-width="1.2"/>
<rect x="813.1" y="488.4" width="6.4" height="13.5" fill="#e6e6e6"/>
<path d="M813.1 488.9 L813.1 502.6" stroke="#00008b" stroke-width="1"/>
<path d="M819.5 488.9 L819.5 502.6" stroke="#00008b" stroke-width="1"/>
<path d="M811.2 485.2 l3 1.5 l-3.2 1.7 z" fill="#1010ff"/>
<path d="M817.6 484.2 l3 1.5 l-3.2 1.7 z" fill="#1010ff"/>
<path d="M818.6 487 l3 1.5 l-3.2 1.7 z" fill="#1010ff"/>
<polygon points="1020.59,487.97 1212.9,450.86 1212.9,462.46 1020.59,499.57" fill="#6b6bd6"/>
<path d="M1020.59 499.52 L1212.9 462.41" stroke="#00008b" stroke-width="1.1"/>
<polygon points="1017.2,483.73 1215.3,445.5 1215.3,450.9 1017.2,489.12" fill="#875200"/>
<path d="M1019.2 486.19 L1213.3 448.74" stroke="#0c0c8b" stroke-width="1.35" stroke-dasharray="6.5 1.1"/>
<polygon points="1217.7,450.4 1415.03,450.4 1415.03,461.5 1217.7,461.5" fill="#6a6af0"/>
<path d="M1217.7 461.45 L1415.03 461.45" stroke="#00008b" stroke-width="1.1"/>
<polygon points="1215.3,445.5 1419.12,445.5 1419.12,450.9 1215.3,450.9" fill="#875200"/>
<path d="M1218.3 448.35 L1416.12 448.35" stroke="#10108b" stroke-width="1.2"/>
<rect x="1212.9" y="450.4" width="4.8" height="13.9" fill="#e6e6e6"/>
<path d="M1212.9 450.9 L1212.9 465" stroke="#00008b" stroke-width="1"/>
<path d="M1217.7 450.9 L1217.7 465" stroke="#00008b" stroke-width="1"/>
<path d="M1403.83 450.9 L1403.83 462.2" stroke="#00008b" stroke-width="1"/>
<path d="M1211 447.2 l3 1.5 l-3.2 1.7 z" fill="#1010ff"/>
<path d="M1215.8 446.2 l3 1.5 l-3.2 1.7 z" fill="#1010ff"/>
<path d="M1216.8 449 l3 1.5 l-3.2 1.7 z" fill="#1010ff"/>
<rect x="1418.83" y="446" width="1.9" height="18.7" fill="#800000"/>
<rect x="1414.72" y="450.9" width="2.6" height="16.7" fill="#8b1430"/>
<path d="M1412.22 445.5 l3 1.5 l-3.2 1.7 z" fill="#1010ff"/>
<path d="M1411.72 449.5 l3 1.5 l-3.2 1.7 z" fill="#1010ff"/>
<rect x="1013.81" y="488.52" width="6.77" height="112.5" fill="url(#mc)"/>
<path d="M1013.81 600.62 L1020.59 600.62" stroke="#8b0000" stroke-width="1.1"/>
<rect x="1013.81" y="484.33" width="6.77" height="5" fill="#a2541c"/>
<path d="M1010.3 484.23 l3 1.5 l-3.2 1.7 z" fill="#1010ff"/>
<path d="M1020.8 484.23 l3 1.5 l-3.2 1.7 z" fill="#1010ff"/>
<path d="M1011.3 487.73 l3 1.5 l-3.2 1.7 z" fill="#1010ff"/>
<path d="M618.33 519.82 l3 1.5 l-3.2 1.7 z" fill="#1010ff"/>
<path d="M620.53 522.02 l3 1.5 l-3.2 1.7 z" fill="#1010ff"/>
<path d="M618.93 525.62 l3 1.5 l-3.2 1.7 z" fill="#1010ff"/>
<path d="M618.83 637.52 l3 1.5 l-3.2 1.7 z" fill="#1010ff"/>
</g>
<g><!-- frame 5 -->
<rect x="1443.3" y="489" width="3.8" height="117.6" fill="#6b6bd6"/>
<path d="M1443.3 489 L1443.3 606.6" stroke="#00008b" stroke-width="1"/>
<rect x="1447.2" y="489" width="1" height="117.6" fill="#8b0a0a"/>
<rect x="1448.2" y="489" width="1.1" height="117.6" fill="#8a70c0"/>
<rect x="1449.3" y="489" width="0.9" height="117.6" fill="#12128c"/>
<rect x="1450.2" y="489" width="1" height="117.6" fill="#f0a8a0"/>
<rect x="1451.2" y="488.5" width="1.8" height="118.1" fill="#800000"/>
<path d="M1440.3 606.2 L1449.9 606.2" stroke="#00008b" stroke-width="1.1"/>
<rect x="645.2" y="565.1" width="1.8" height="117.6" fill="#8b0000"/>
<rect x="647" y="565.1" width="1" height="117.6" fill="#e09a94"/>
<rect x="648" y="565.1" width="1.1" height="117.6" fill="#18188c"/>
<rect x="649.1" y="565.1" width="1" height="117.6" fill="#d898c0"/>
<rect x="650.1" y="565.1" width="2" height="117.6" fill="#8b0000"/>
<rect x="652.3" y="566.5" width="3.6" height="116.2" fill="#6b6bd6"/>
<path d="M652.3 567.5 L652.3 682.1" stroke="#2020a0" stroke-width="0.8"/>
<path d="M650 681.8 L659.5 680.5" stroke="#00008b" stroke-width="1.1"/>
<polygon points="652,569.6 844.8,531.73 844.8,536.03 652,573.9" fill="#6b6bd6"/>
<path d="M652 573.85 L844.8 535.98" stroke="#00008b" stroke-width="1.1"/>
<polygon points="652,564.5 848,526 848,531.6 652,570.1" fill="#875200"/>
<path d="M654 567.06 L846 529.34" stroke="#0c0c8b" stroke-width="1.35" stroke-dasharray="6.5 1.1"/>
<path d="M655.9 569.33 L655.9 682.7" stroke="#00008b" stroke-width="1"/>
<polygon points="851.2,531.1 1046.1,531.3 1046.1,535.6 851.2,535.4" fill="#6a6af0"/>
<path d="M851.2 535.35 L1046.1 535.55" stroke="#00008b" stroke-width="1.1"/>
<polygon points="848,526 1049.6,526.2 1049.6,531.8 848,531.6" fill="#875200"/>
<path d="M852 528.95 L1046.6 529.15" stroke="#4646b4" stroke-width="1.7"/>
<path d="M844.8 532.63 L844.8 540.63" stroke="#00008b" stroke-width="1.1"/>
<path d="M851.2 529 L851.2 539" stroke="#00008b" stroke-width="1.1"/>
<rect x="845.4" y="528" width="2.8" height="1.6" fill="#f2d9a8"/>
<path d="M842.9 527.7 l3 1.5 l-3.2 1.7 z" fill="#1010ff"/>
<path d="M849.3 526.7 l3 1.5 l-3.2 1.7 z" fill="#1010ff"/>
<path d="M850.3 529.5 l3 1.5 l-3.2 1.7 z" fill="#1010ff"/>
<polygon points="1053.1,530.63 1245.8,493.52 1245.8,498.12 1053.1,535.23" fill="#6b6bd6"/>
<path d="M1053.1 535.18 L1245.8 498.07" stroke="#00008b" stroke-width="1.1"/>
<polygon points="1049.6,526.2 1248,488 1248,493.6 1049.6,531.8" fill="#875200"/>
<path d="M1051.6 528.76 L1246 491.34" stroke="#0c0c8b" stroke-width="1.35" stroke-dasharray="6.5 1.1"/>
<polygon points="1252,493.1 1447.3,493.1 1447.3,497.2 1252,497.2" fill="#6a6af0"/>
<path d="M1252 497.15 L1447.3 497.15" stroke="#00008b" stroke-width="1.1"/>
<polygon points="1248,488 1451.4,488 1451.4,493.6 1248,493.6" fill="#875200"/>
<path d="M1252 490.95 L1448.4 490.95" stroke="#4646b4" stroke-width="1.7"/>
<path d="M1245.8 492 L1245.8 501" stroke="#00008b" stroke-width="1.1"/>
<path d="M1252 491 L1252 500" stroke="#00008b" stroke-width="1.1"/>
<path d="M1243.9 489.7 l3 1.5 l-3.2 1.7 z" fill="#1010ff"/>
<path d="M1250.1 488.7 l3 1.5 l-3.2 1.7 z" fill="#1010ff"/>
<path d="M1251.1 491.5 l3 1.5 l-3.2 1.7 z" fill="#1010ff"/>
<rect x="1451.1" y="488.5" width="1.9" height="11.9" fill="#800000"/>
<path d="M1444.5 488 l3 1.5 l-3.2 1.7 z" fill="#1010ff"/>
<path d="M1444 492 l3 1.5 l-3.2 1.7 z" fill="#1010ff"/>
<rect x="1046.1" y="531.2" width="7" height="112.3" fill="url(#mc)"/>
<path d="M1046.1 643.1 L1053.1 643.1" stroke="#8b0000" stroke-width="1.1"/>
<rect x="1046.1" y="526.8" width="7" height="5.2" fill="#a2541c"/>
<path d="M1042.7 526.7 l3 1.5 l-3.2 1.7 z" fill="#1010ff"/>
<path d="M1053.2 526.7 l3 1.5 l-3.2 1.7 z" fill="#1010ff"/>
<path d="M1043.7 530.2 l3 1.5 l-3.2 1.7 z" fill="#1010ff"/>
<path d="M650.6 562.4 l3 1.5 l-3.2 1.7 z" fill="#1010ff"/>
<path d="M652.8 564.6 l3 1.5 l-3.2 1.7 z" fill="#1010ff"/>
<path d="M651.2 568.2 l3 1.5 l-3.2 1.7 z" fill="#1010ff"/>
<path d="M651.1 680.1 l3 1.5 l-3.2 1.7 z" fill="#1010ff"/>
</g>
</svg>

<!-- viewport toolbar -->
<svg class="abs" style="left:848px;top:180px" width="264" height="42" viewBox="848 180 264 42">
  <!-- zoom extents -->
  <path d="M873 203 L881.5 211.5" stroke="#111" stroke-width="3.6" stroke-linecap="round"/>
  <circle cx="865" cy="196" r="10.6" fill="#dfe3e8" stroke="#6d7278" stroke-width="1"/><circle cx="865" cy="196" r="8.6" fill="#9cc0e8" stroke="#f4f6f8" stroke-width="1.4"/>
  <path d="M860 194 V191 H863 M867 191 H870 V194 M870 198 V201 H867 M863 201 H860 V198" fill="none" stroke="#2c2c2c" stroke-width="1.7"/>
  <!-- rotate -->
  <ellipse cx="908" cy="215.500" rx="11" ry="1.200" fill="#c8c8c8" opacity=".7"/>
  <path d="M895 211 L920.300 184" stroke="#333" stroke-width="1.700"/>
  <path d="M899 190.500 C907 186.500 915.500 191 915.800 204" fill="none" stroke="#4a4a4a" stroke-width="3.200"/>
  <path d="M899 190.500 C907 186.500 915.500 191 915.800 204" fill="none" stroke="#8a8a8a" stroke-width="1"/>
  <path d="M893.600 188.600 L902.400 185 L901.200 194.800 Z M910.200 203.600 L920.400 203.600 L915.600 213.200 Z" fill="#555" stroke="#222" stroke-width=".7"/>
  <!-- pan -->
  <g stroke="#cf0000" stroke-width="3" fill="none"><path d="M942 188.500 V197 M942 203 V211.500 M930.500 200 H939 M945 200 H953.500"/><path d="M937 191.200 L942 185.600 L947 191.200 M937 208.800 L942 214.400 L947 208.800 M933.200 195 L927.600 200 L933.200 205 M950.800 195 L956.400 200 L950.800 205" stroke-width="2.800"/></g>
  <!-- zoom window -->
  <rect x="964.500" y="188.500" width="30" height="23" rx="1.500" fill="#f1f3f7" stroke="#c3c8d4" stroke-width="1"/><rect x="965.500" y="189.500" width="28" height="2.400" fill="#dde1ea"/><path d="M966 213.300 H993" stroke="#d9dbe0" stroke-width="1.200"/>
  <circle cx="976.500" cy="197" r="6.200" fill="#fcfcfd" stroke="#6a6a6a" stroke-width="1.100"/><path d="M981 201.800 L990.500 211" stroke="#3c3c3c" stroke-width="2" stroke-linecap="round"/>
  <!-- funnel -->
  <defs><linearGradient id="fn" x1="0" y1="0" x2="1" y2="0"><stop offset="0" stop-color="#a9adb3"/><stop offset=".4" stop-color="#f5f6f8"/><stop offset=".7" stop-color="#c4c7cc"/><stop offset="1" stop-color="#8f949b"/></linearGradient></defs>
  <path d="M1002 186 L1032 186 L1020 203 L1020 216 L1014 218 L1014 203 Z" fill="url(#fn)" stroke="#9a9ea5" stroke-width=".8"/><ellipse cx="1017" cy="186.500" rx="15" ry="3" fill="#e4e6ea" stroke="#9a9ea5" stroke-width=".8"/>
  <circle cx="1004.5" cy="196" r="3" fill="#f0f1f3" stroke="#a8acb3" stroke-width=".8"/>
  <!-- view cube -->
  <defs><linearGradient id="vc" x1="0" y1="0" x2="1" y2="1"><stop offset="0" stop-color="#eaf0f8"/><stop offset="1" stop-color="#9fb8dc"/></linearGradient></defs>
  <rect x="1043" y="194.500" width="16.500" height="16.500" fill="url(#vc)" stroke="#111" stroke-width="1.500"/>
  <path d="M1038 211 V189.500 H1042 V211 Z" fill="#f3c8cc" stroke="#111" stroke-width="1"/><path d="M1035.800 190 L1040 183.300 L1044.200 190 Z" fill="#f3c8cc" stroke="#111" stroke-width="1"/>
  <path d="M1038 211.300 H1063 V215.300 H1038 Z" fill="#f8f8e4" stroke="#111" stroke-width="1"/><path d="M1063 209.300 L1069.400 213.300 L1063 217.300 Z" fill="#f8f8e4" stroke="#111" stroke-width="1"/>
  <!-- section line -->
  <path d="M1073 200.500 H1108" stroke="#222" stroke-width="1"/><rect x="1084.500" y="194.500" width="11" height="11" fill="#f0c4c8" stroke="#a06068" stroke-width=".8" stroke-dasharray="1.6 1"/>
</svg>
<!-- axis gizmo -->
<svg class="abs" style="left:395px;top:775px" width="50" height="45" viewBox="395 775 50 45">
  <defs><linearGradient id="gz" x1="0" y1="0" x2="0" y2="1"><stop offset="0" stop-color="#e8e8e4"/><stop offset="1" stop-color="#a8a8a8"/></linearGradient></defs>
  <path d="M402.600 801.600 L405.400 801.800 L410.400 808.800 L408.400 811.800 L402 804.400 Z" fill="#e4e4e4" stroke="#8c8c8c" stroke-width=".6"/>
  <path d="M402.300 804 C401.500 802.500 402.500 801.300 404 801.600" fill="none" stroke="#444" stroke-width=".8"/>
  <path d="M406.200 803 L427.900 801.200 L433.600 807.600 L411.400 809.800 Z" fill="#0000f2"/>
  <path d="M411.400 809.800 L433.600 807.600 L434.200 811.400 L412 813.600 Z" fill="url(#gz)"/>
  <path d="M434 806.400 L441.800 809.200 L434.600 813.800 Z" fill="#ababab"/><path d="M434 806.400 L441.800 809.200 L434.300 809.800 Z" fill="#bdbdbd"/>
  <path d="M407.800 789.400 H412.100 V812 H407.800 Z" fill="#fa0505"/><path d="M410.900 789.400 H412.100 V812 H410.900 Z" fill="#d80000"/>
  <path d="M405.800 789.800 L409.950 780.800 L414.100 789.800 Z" fill="#fa0505"/>
  <circle cx="409.950" cy="812.300" r="2.900" fill="#f40404"/>
</svg>
<div class="t" style="left:773.61px;top:6.19px;font-size:11px;line-height:13px;color:#222;transform:scaleX(1.0368);transform-origin:50% 50%;">STASteel -</div>
<div class="t" style="left:23.43px;top:37.79px;font-size:11px;line-height:13px;color:#fff;transform:scaleX(0.9589);transform-origin:50% 50%;">Menü</div>
<div class="t" style="left:85.47px;top:37.79px;font-size:11px;line-height:13px;color:#333;transform:scaleX(0.9231);transform-origin:50% 50%;">Yapı Elemanları</div>
<div class="t" style="left:190.08px;top:37.79px;font-size:11px;line-height:13px;color:#333;transform:scaleX(0.9213);transform-origin:50% 50%;">Araçlar</div>
<div class="t" style="left:253.63px;top:37.79px;font-size:11px;line-height:13px;color:#333;transform:scaleX(0.9466);transform-origin:50% 50%;">Birleşimler</div>
<div class="t" style="left:333.27px;top:37.79px;font-size:11px;line-height:13px;color:#333;transform:scaleX(0.9618);transform-origin:50% 50%;">Program Ayar</div>
<div class="t" style="left:427.16px;top:37.79px;font-size:11px;line-height:13px;color:#333;transform:scaleX(0.9366);transform-origin:50% 50%;z-index:4;">Hesap Ve Tasarım</div>
<div class="t" style="left:543.85px;top:37.79px;font-size:11px;line-height:13px;color:#333;transform:scaleX(0.9273);transform-origin:50% 50%;">Çizim</div>
<div class="t" style="left:1573.40px;top:35.89px;font-size:11px;line-height:13px;color:#333;transform:scaleX(0.9547);transform-origin:0 50%;">Help</div>
<div class="t" style="left:7.20px;top:99.94px;font-size:11px;line-height:12px;color:#1e1e1e;transform:scaleX(0.9257);transform-origin:50% 50%;">Analizi</div>
<div class="t" style="left:7.81px;top:112.09px;font-size:11px;line-height:12px;color:#1e1e1e;transform:scaleX(0.8830);transform-origin:50% 50%;">Başlat</div>
<div class="t" style="left:44.24px;top:99.94px;font-size:11px;line-height:12px;color:#1e1e1e;transform:scaleX(0.9099);transform-origin:50% 50%;">Tasarım</div>
<div class="t" style="left:45.15px;top:112.09px;font-size:11px;line-height:12px;color:#1e1e1e;transform:scaleX(0.9018);transform-origin:50% 50%;">Ayarları</div>
<div class="t" style="left:105.62px;top:99.94px;font-size:11px;line-height:12px;color:#1e1e1e;transform:scaleX(1.0010);transform-origin:50% 50%;">Model</div>
<div class="t" style="left:87.87px;top:112.09px;font-size:11px;line-height:12px;color:#1e1e1e;transform:scaleX(0.9361);transform-origin:50% 50%;">Hatalarını Bul</div>
<div class="t" style="left:159.94px;top:99.94px;font-size:11px;line-height:12px;color:#1e1e1e;transform:scaleX(0.8957);transform-origin:50% 50%;">Kesişim</div>
<div class="t" style="left:159.51px;top:112.09px;font-size:11px;line-height:12px;color:#1e1e1e;transform:scaleX(0.9760);transform-origin:50% 50%;">Kontrolu</div>
<div class="t" style="left:206.49px;top:99.94px;font-size:11px;line-height:12px;color:#1e1e1e;transform:scaleX(0.9501);transform-origin:50% 50%;">Malzeme</div>
<div class="t" style="left:280.25px;top:99.94px;font-size:11px;line-height:12px;color:#1e1e1e;transform:scaleX(0.9328);transform-origin:50% 50%;">Sonlu Eleman</div>
<div class="t" style="left:275.98px;top:112.09px;font-size:11px;line-height:12px;color:#1e1e1e;transform:scaleX(0.9618);transform-origin:50% 50%;">Modelini Göster</div>
<div class="t" style="left:357.69px;top:99.94px;font-size:11px;line-height:12px;color:#4a4436;transform:scaleX(0.9219);transform-origin:50% 50%;">Yükleri</div>
<div class="t" style="left:358.19px;top:112.09px;font-size:11px;line-height:12px;color:#4a4436;transform:scaleX(0.8905);transform-origin:50% 50%;">Göster</div>
<div class="t" style="left:429.78px;top:99.94px;font-size:11px;line-height:12px;color:#8e9297;transform:scaleX(0.9059);transform-origin:50% 50%;">Şekil</div>
<div class="t" style="left:415.71px;top:112.09px;font-size:11px;line-height:12px;color:#8e9297;transform:scaleX(0.9700);transform-origin:50% 50%;">Değiştirme</div>
<div class="t" style="left:481.80px;top:99.94px;font-size:11px;line-height:12px;color:#8e9297;transform:scaleX(1.0231);transform-origin:50% 50%;">Mod</div>
<div class="t" style="left:473.74px;top:112.09px;font-size:11px;line-height:12px;color:#8e9297;transform:scaleX(0.9347);transform-origin:50% 50%;">Şekilleri</div>
<div class="t" style="left:517.77px;top:99.94px;font-size:11px;line-height:12px;color:#8e9297;transform:scaleX(0.9684);transform-origin:50% 50%;">Burkulma</div>
<div class="t" style="left:521.74px;top:112.09px;font-size:11px;line-height:12px;color:#8e9297;transform:scaleX(0.9347);transform-origin:50% 50%;">Şekilleri</div>
<div class="t" style="left:586.60px;top:99.94px;font-size:11px;line-height:12px;color:#8e9297;transform:scaleX(0.9435);transform-origin:50% 50%;">Çubuk</div>
<div class="t" style="left:578.65px;top:112.09px;font-size:11px;line-height:12px;color:#8e9297;transform:scaleX(0.9442);transform-origin:50% 50%;">Kuvvetleri</div>
<div class="t" style="left:662.94px;top:99.94px;font-size:11px;line-height:12px;color:#8e9297;transform:scaleX(0.9457);transform-origin:50% 50%;">Tasarım</div>
<div class="t" style="left:640.19px;top:112.09px;font-size:11px;line-height:12px;color:#8e9297;transform:scaleX(0.9460);transform-origin:50% 50%;">Sonucunu Göster</div>
<div class="t" style="left:837.52px;top:99.94px;font-size:11px;line-height:12px;color:#1e1e1e;transform:scaleX(0.9343);transform-origin:50% 50%;">Rapor</div>
<div class="t" style="left:835.27px;top:112.09px;font-size:11px;line-height:12px;color:#1e1e1e;transform:scaleX(0.9811);transform-origin:50% 50%;">Oluştur</div>
<div class="t" style="left:885.20px;top:99.94px;font-size:11px;line-height:12px;color:#8e9297;transform:scaleX(0.9435);transform-origin:50% 50%;">Düzenlemeyi</div>
<div class="t" style="left:910.58px;top:112.09px;font-size:11px;line-height:12px;color:#8e9297;transform:scaleX(0.9343);transform-origin:50% 50%;">Aç</div>
<div class="t" style="left:745.00px;top:88.09px;font-size:11px;line-height:13px;color:#8e9297;transform:scaleX(0.9406);transform-origin:0 50%;">Döşeme Sonucu</div>
<div class="t" style="left:84.16px;top:132.89px;font-size:11px;line-height:13px;color:#5b626a;transform:scaleX(0.9232);transform-origin:50% 50%;">Hesap Ve Tasarım</div>
<div class="t" style="left:259.01px;top:132.89px;font-size:11px;line-height:13px;color:#5b626a;transform:scaleX(0.9524);transform-origin:50% 50%;">Sonlu Eleman Modelini Göster</div>
<div class="t" style="left:450.57px;top:132.89px;font-size:11px;line-height:13px;color:#5b626a;transform:scaleX(0.9513);transform-origin:50% 50%;">Şekil Değiştirme</div>
<div class="t" style="left:586.18px;top:129.89px;font-size:11px;line-height:13px;color:#5b626a;transform:scaleX(0.9215);transform-origin:50% 50%;">Kuvvet</div>
<div class="t" style="left:710.44px;top:132.89px;font-size:11px;line-height:13px;color:#5b626a;transform:scaleX(0.9201);transform-origin:50% 50%;">Tasarım</div>
<div class="t" style="left:837.32px;top:132.89px;font-size:11px;line-height:13px;color:#5b626a;transform:scaleX(0.9510);transform-origin:50% 50%;">Rapor</div>
<div class="t" style="left:10.60px;top:158.87px;font-size:11.5px;line-height:13.5px;color:#fff;transform:scaleX(1.0390);transform-origin:0 50%;">Makro</div>
<div class="t" style="left:12.50px;top:224.63px;font-size:14.5px;line-height:16.5px;color:#222;transform:scaleX(1.1229);transform-origin:0 50%;-webkit-text-stroke:0.45px #222;">Macro</div>
<div class="t" style="left:23.75px;top:252.72px;font-size:11.5px;line-height:13.5px;color:#1c1c1c;transform:scaleX(0.9782);transform-origin:0 50%;">Yükler</div>
<div class="t" style="left:28.75px;top:279.72px;font-size:11.5px;line-height:13.5px;color:#1c1c1c;transform:scaleX(0.9748);transform-origin:0 50%;">Rüzgar Yükü Y</div>
<div class="t" style="left:23.75px;top:310.57px;font-size:11.5px;line-height:13.5px;color:#1c1c1c;transform:scaleX(1.0133);transform-origin:0 50%;">Yük Tipleri</div>
<div class="t" style="left:41.50px;top:345.57px;font-size:11.5px;line-height:13.5px;color:#1c1c1c;transform:scaleX(1.0196);transform-origin:0 50%;">Kendi Ağırlığı</div>
<div class="t" style="left:141.25px;top:338.07px;font-size:11.5px;line-height:13.5px;color:#1c1c1c;transform:scaleX(1.0735);transform-origin:0 50%;">Otomatik</div>
<div class="t" style="left:141.60px;top:353.72px;font-size:11.5px;line-height:13.5px;color:#1c1c1c;transform:scaleX(0.9844);transform-origin:0 50%;">Yükler</div>
<div class="t" style="left:241.50px;top:338.07px;font-size:11.5px;line-height:13.5px;color:#1c1c1c;transform:scaleX(0.9658);transform-origin:0 50%;">Kullanıcı</div>
<div class="t" style="left:241.50px;top:353.72px;font-size:11.5px;line-height:13.5px;color:#1c1c1c;transform:scaleX(0.9870);transform-origin:0 50%;">Yükleri</div>
<div class="t" style="left:41.50px;top:375.57px;font-size:11.5px;line-height:13.5px;color:#1c1c1c;transform:scaleX(0.9859);transform-origin:0 50%;">Kaplama</div>
<div class="t" style="left:41.50px;top:391.47px;font-size:11.5px;line-height:13.5px;color:#1c1c1c;transform:scaleX(1.0127);transform-origin:0 50%;">Dağılım Yükleri</div>
<div class="t" style="left:23.10px;top:422.47px;font-size:11.5px;line-height:13.5px;color:#1c1c1c;transform:scaleX(1.0292);transform-origin:0 50%;">Çizim Tipi</div>
<div class="t" style="left:41.50px;top:449.72px;font-size:11.5px;line-height:13.5px;color:#1c1c1c;transform:scaleX(0.9719);transform-origin:0 50%;">Gerçekçi</div>
<div class="t" style="left:104.40px;top:449.72px;font-size:11.5px;line-height:13.5px;color:#1c1c1c;transform:scaleX(0.9785);transform-origin:0 50%;">Çizgisel</div>
<div class="t" style="left:366.00px;top:157.87px;font-size:11.5px;line-height:13.5px;color:#111;transform:scaleX(1.0257);transform-origin:0 50%;">3D Kot 0</div>
<div class="t" style="left:11.50px;top:849.67px;font-size:11.5px;line-height:13.5px;color:#222;transform:scaleX(1.0296);transform-origin:0 50%;">Makro</div>
<div class="t" style="left:58.75px;top:849.67px;font-size:11.5px;line-height:13.5px;color:#fff;transform:scaleX(0.9600);transform-origin:0 50%;">Yapı</div>
<div class="t" style="left:3.75px;top:878.57px;font-size:11.5px;line-height:13.5px;color:#3b3f45;transform:scaleX(1.0072);transform-origin:0 50%;">MUCAHIT DEMIR</div>
<div class="t" style="left:113.50px;top:878.57px;font-size:11.5px;line-height:13.5px;color:#3b3f45;transform:scaleX(0.9860);transform-origin:0 50%;">Hazır</div>
<div class="t" style="left:1537.89px;top:878.57px;font-size:11.5px;line-height:13.5px;color:#3b3f45;transform:scaleX(1.0213);transform-origin:100% 50%;">m mm KN</div>
</body>
</html>
